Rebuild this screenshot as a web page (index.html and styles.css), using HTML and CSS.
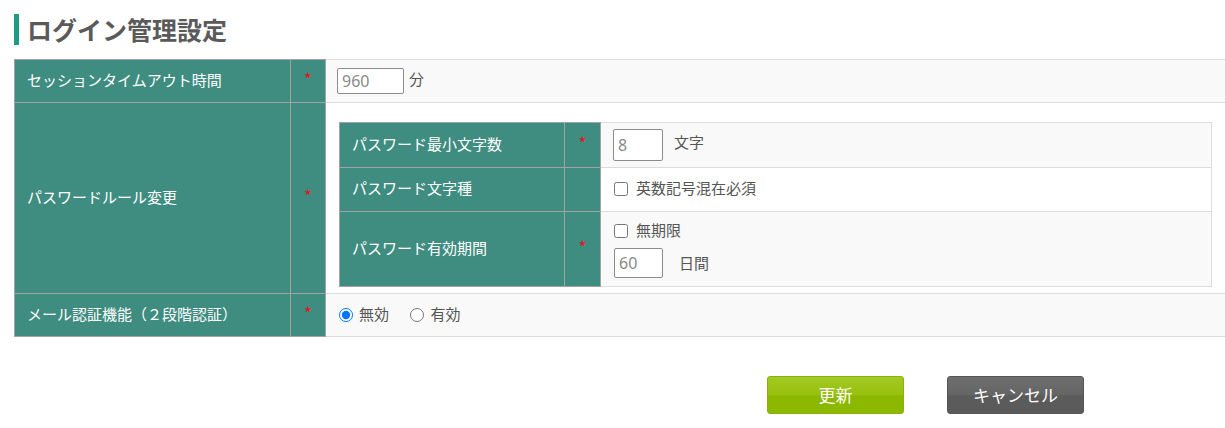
FILE: index.html
```html
<!DOCTYPE html>
<html lang="ja">
<head>
<meta charset="utf-8">
<title>ログイン管理設定</title>
<link rel="stylesheet" href="styles.css">
</head>
<body>
<div class="page">
  <h1 class="title">ログイン管理設定</h1>
  <table class="form-table">
    <colgroup><col class="c-label"><col class="c-star"><col></colgroup>
    <tr class="row-1">
      <th class="label">セッションタイムアウト時間</th>
      <th class="star">*</th>
      <td class="value"><input class="num num-lg" type="text" value="960"><span class="unit">分</span></td>
    </tr>
    <tr class="row-2">
      <th class="label">パスワードルール変更</th>
      <th class="star">*</th>
      <td class="value nested">
        <table class="inner-table">
          <colgroup><col class="ic-label"><col class="ic-star"><col></colgroup>
          <tr class="ir-1">
            <th class="label">パスワード最小文字数</th>
            <th class="star">*</th>
            <td class="value"><input class="num num-sm" type="text" value="8"><span class="unit unit-wide">文字</span></td>
          </tr>
          <tr class="ir-2">
            <th class="label">パスワード文字種</th>
            <th class="star"></th>
            <td class="value"><label class="check"><input type="checkbox"><span>英数記号混在必須</span></label></td>
          </tr>
          <tr class="ir-3">
            <th class="label">パスワード有効期間</th>
            <th class="star">*</th>
            <td class="value">
              <label class="check"><input type="checkbox"><span>無期限</span></label>
              <div class="days"><input class="num num-sm2" type="text" value="60"><span class="unit unit-wider">日間</span></div>
            </td>
          </tr>
        </table>
      </td>
    </tr>
    <tr class="row-3">
      <th class="label">メール認証機能（２段階認証）</th>
      <th class="star">*</th>
      <td class="value">
        <label class="radio"><input type="radio" name="mfa" checked><span>無効</span></label>
        <label class="radio"><input type="radio" name="mfa"><span>有効</span></label>
      </td>
    </tr>
  </table>
  <div class="actions">
    <button class="btn btn-primary" type="button">更新</button>
    <button class="btn btn-cancel" type="button">キャンセル</button>
  </div>
</div>
</body>
</html>
```

FILE: styles.css
```css
html, body {
  margin: 0;
  padding: 0;
  overflow: hidden;
  background: #fff;
}
body {
  font-family: "Noto Sans CJK JP", "Noto Sans", sans-serif;
  color: #555;
  font-size: 15px;
  line-height: 1.3;
}
.page {
  padding: 14px 0 0 14px;
  width: 1212px;
}
.title {
  margin: 0 0 14px 0;
  padding-left: 8px;
  border-left: 5px solid #1f9a85;
  font-size: 25px;
  line-height: 31px;
  font-weight: bold;
  color: #5a5a5a;
}
.form-table {
  width: 1212px;
  border-collapse: collapse;
  table-layout: fixed;
}
.c-label { width: 276px; }
.c-star { width: 35px; }
.form-table th,
.form-table td {
  padding: 0;
  font-weight: normal;
  text-align: left;
  vertical-align: middle;
}
.form-table th.label,
.form-table th.star {
  background: #3f8c80;
  color: #fff;
  border: 1px solid #a3a3a3;
}
.form-table th.label {
  padding: 0 0 3px 12px;
}
.form-table th.star {
  text-align: center;
  color: #e8141c;
  font-size: 17px;
  padding-bottom: 3px;
}
.form-table td.value {
  border: 1px solid #dcdcdc;
  border-left-color: #a3a3a3;
  background: #f9f9f9;
  padding-left: 12px;
}
.row-1 { height: 43px; }
.row-3 { height: 43px; }
.row-2 > td.value {
  background: #fff;
  padding: 19px 13px 6px 13px;
}
.inner-table {
  width: 100%;
  border-collapse: collapse;
  table-layout: fixed;
}
.ic-label { width: 225px; }
.ic-star { width: 36px; }
.inner-table th.label { padding-left: 12px; }
.inner-table td.value { padding-left: 12px; }
.ir-1 { height: 45px; }
.ir-2 { height: 44px; }
.ir-2 > td.value { background: #fff; }
.ir-3 { height: 75px; }

.num {
  box-sizing: border-box;
  font-family: "Noto Sans", "Noto Sans CJK JP", sans-serif;
  font-size: 16px;
  color: #8a8a8a;
  border: 1px solid #8c8c8c;
  border-radius: 2px;
  background: #fff;
  padding: 0 4px;
  vertical-align: middle;
  margin: 0;
}
.num-lg { width: 67px; height: 26px; margin-left: -1px; }
.num-sm { width: 50px; height: 32px; }
.num-sm2 { width: 49px; height: 30px; margin-left: 1px; }
.unit {
  margin-left: 5px;
  vertical-align: middle;
  position: relative;
  top: -2px;
}
.unit-wide { margin-left: 11px; top: -3px; }
.unit-wider { margin-left: 16px; top: 0; }

.check, .radio {
  display: inline-flex;
  align-items: center;
  color: #555;
}
.check span, .radio span {
  position: relative;
  top: -1px;
}
.check input {
  width: 14px;
  height: 14px;
  margin: 0 8px 0 1px;
}
.radio input {
  width: 14px;
  height: 14px;
  margin: 0 6px 0 1px;
}
.radio + .radio { margin-left: 17px; }
.days {
  margin-top: 7px;
  display: flex;
  align-items: center;
}
.ir-3 > td.value { padding-top: 1px; }

.actions {
  display: flex;
  gap: 43px;
  padding-left: 753px;
  margin-top: 39px;
}
.btn {
  box-sizing: border-box;
  width: 137px;
  height: 38px;
  border-radius: 3px;
  color: #fff;
  font-family: "Noto Sans CJK JP", sans-serif;
  font-size: 17px;
  line-height: 1;
  cursor: pointer;
  padding: 0 0 2px 0;
}
.btn-primary {
  background: linear-gradient(#a3ca22, #97c00f 50%, #8cb700 52%, #8cb800);
  border: 1px solid #88b20a;
}
.btn-cancel {
  background: linear-gradient(#6f6f6f, #646464 50%, #5b5b5b 52%, #5a5a5a);
  border: 1px solid #555;
}
```
